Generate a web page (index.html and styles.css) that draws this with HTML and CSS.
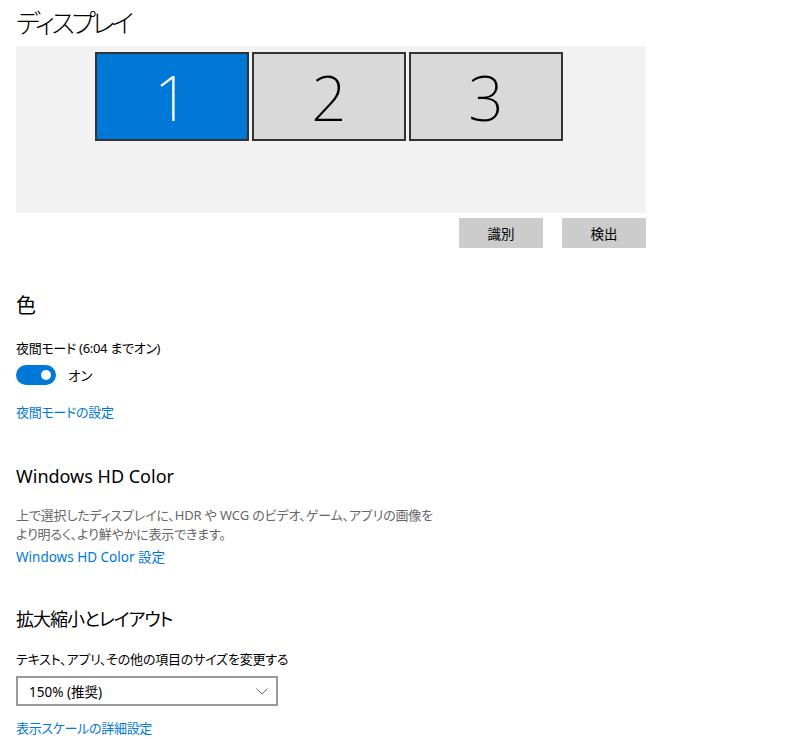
FILE: index.html
```html
<!DOCTYPE html>
<html lang="ja">
<head>
<meta charset="utf-8">
<link rel="stylesheet" href="styles.css">
</head>
<body>
<main class="page">
  <h1 class="title">ディスプレイ</h1>
  <div class="canvas">
    <div class="monitors">
      <div class="monitor selected">1</div>
      <div class="monitor">2</div>
      <div class="monitor">3</div>
    </div>
  </div>
  <div class="actions">
    <button class="btn">識別</button>
    <button class="btn">検出</button>
  </div>

  <h2 class="heading h-color">色</h2>
  <div class="label">夜間モード (6:04 までオン)</div>
  <div class="toggle-row">
    <span class="toggle"><span class="knob"></span></span>
    <span class="toggle-text">オン</span>
  </div>
  <a class="link link-night">夜間モードの設定</a>

  <h2 class="heading h-hd">Windows HD Color</h2>
  <p class="desc">上で選択したディスプレイに、HDR や WCG のビデオ、ゲーム、アプリの画像を<br>より明るく、より鮮やかに表示できます。</p>
  <a class="link link-hd">Windows HD Color 設定</a>

  <h2 class="heading h-scale">拡大縮小とレイアウト</h2>
  <div class="label label-scale">テキスト、アプリ、その他の項目のサイズを変更する</div>
  <div class="select">
    <span>150% (推奨)</span>
    <svg class="chev" width="12" height="7" viewBox="0 0 12 7"><path d="M0.5 0.5 L6 6 L11.5 0.5" fill="none" stroke="#666" stroke-width="1"/></svg>
  </div>
  <a class="link link-scale">表示スケールの詳細設定</a>
</main>
</body>
</html>
```
FILE: styles.css
```css
* { box-sizing: border-box; }
html, body { margin: 0; padding: 0; background: #fff; }
body {
  font-family: "Noto Sans", "Noto Sans CJK JP", sans-serif;
  font-feature-settings: "palt" 1;
  color: #000;
  width: 800px;
  height: 739px;
  overflow: hidden;
}
.page {
  padding: 0 0 0 16px;
  display: flex;
  flex-direction: column;
  align-items: flex-start;
}
.title {
  margin: 6px 0 0 0;
  font-size: 26px;
  font-weight: 300;
  letter-spacing: -3.5px;
  line-height: 34px;
  height: 40px;
}
.canvas {
  width: 630px;
  height: 167px;
  background: #f2f2f2;
  padding: 6px 0 0 79px;
}
.monitors {
  display: flex;
  gap: 3px;
}
.monitor {
  width: 154px;
  height: 89px;
  background: #d9d9d9;
  border: 2px solid #333;
  display: flex;
  align-items: center;
  justify-content: center;
  font-family: "Noto Sans", sans-serif;
  font-weight: 200;
  font-size: 62px;
  color: #000;
  line-height: 1;
}
.monitor.selected {
  background: #0078d7;
  color: #fff;
}
.actions {
  width: 630px;
  display: flex;
  justify-content: flex-end;
  gap: 19px;
  margin-top: 5px;
}
.btn {
  width: 84px;
  height: 30px;
  background: #cccccc;
  border: none;
  font-family: "Noto Sans CJK JP", sans-serif;
  font-size: 13.5px;
  color: #000;
  padding: 0;
}
.heading {
  margin: 0;
  font-size: 18px;
  font-weight: 400;
  line-height: 28px;
}
.h-color { margin-top: 44px; font-size: 20px; }
.label {
  font-size: 13px;
  letter-spacing: -0.3px;
  line-height: 20px;
  margin-top: 18px;
}
.toggle-row {
  display: flex;
  align-items: center;
  margin-top: 7px;
  height: 20px;
}
.toggle {
  width: 40px;
  height: 20px;
  border-radius: 10px;
  background: #0078d7;
  display: flex;
  align-items: center;
  justify-content: flex-end;
  padding-right: 5px;
}
.knob {
  width: 10px;
  height: 10px;
  border-radius: 50%;
  background: #fff;
}
.toggle-text {
  font-size: 13.5px;
  margin-left: 12px;
}
.link {
  color: #0078d7;
  font-size: 13px;
  letter-spacing: -0.3px;
  line-height: 20px;
  cursor: pointer;
}
.link-night { margin-top: 17px; }
.h-hd { margin-top: 40px; }
.desc {
  margin: 16px 0 0 0;
  font-size: 13px;
  letter-spacing: -0.15px;
  line-height: 19px;
  color: #666;
}
.link-hd { margin-top: 3px; font-size: 13.5px; letter-spacing: 0; }
.h-scale { margin-top: 38px; letter-spacing: -1px; }
.label-scale { margin-top: 16px; letter-spacing: -0.2px; }
.select {
  margin-top: 7px;
  width: 262px;
  height: 30px;
  border: 2px solid #999;
  display: flex;
  align-items: center;
  justify-content: space-between;
  padding: 0 8px 0 11px;
  font-size: 13.5px;
}
.chev { margin-top: 1px; }
.link-scale { margin-top: 12px; }
```
